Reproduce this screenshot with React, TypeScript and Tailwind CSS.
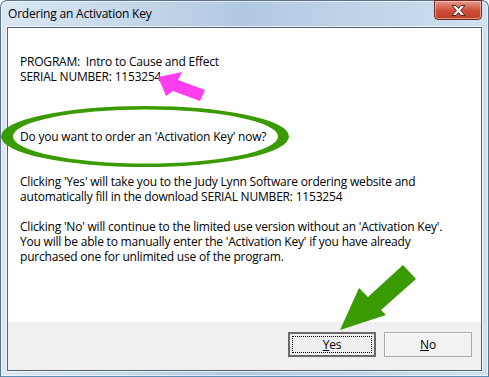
import { FC } from "react";

const font = { fontFamily: '"Open Sans", "Noto Sans", Arial, sans-serif' };

const CloseButton: FC = () => (
  <div className="self-start mt-[-1px] w-[48px] h-[20px] rounded-b-[4px] border border-[#6b2a22] bg-gradient-to-b from-[#e59a8b] via-[#d0513b] to-[#c03c28] flex items-center justify-center shadow-[inset_0_0_0_1px_rgba(255,220,210,0.55)]">
    <svg width="17" height="13" viewBox="0 0 17 13">
      <path d="M2 1.5h4l2.5 3 2.5-3h4l-4.5 5 4.5 5h-4l-2.5-3-2.5 3h-4l4.5-5z" fill="#ffffff" stroke="#4a2520" strokeWidth="1" strokeLinejoin="round" />
    </svg>
  </div>
);

const Annotations: FC = () => (
  <svg className="absolute inset-0 pointer-events-none" width="489" height="377" viewBox="0 0 489 377">
    {/* ellipse round the question */}
    <path
      fillRule="evenodd"
      fill="#3a9b00"
      d="M1 136.5a144 30.5 0 1 0 288 0a144 30.5 0 1 0 -288 0z M13 136.5a132.5 27 0 1 0 265 0a132.5 27 0 1 0 -265 0z"
    />
    {/* pink arrow at the serial number */}
    <polygon fill="#ff3df0" points="158,77 182,72 178,80 205,90 200,101 173,91 166,96" />
    {/* green arrow at Yes */}
    <polygon fill="#3a9b00" points="340,330 359,288 368,297 403,265 416,279 381,310 386,315" />
  </svg>
);

const App: FC = () => {
  return (
    <div className="relative w-[489px] h-[377px] overflow-hidden bg-white" style={font}>
      <div className="flex flex-col w-full h-full rounded-t-[7px] border border-[#5d738c] border-b-[#5a8fb8] bg-gradient-to-r from-[#dbe7f3] via-[#b1c9e1] to-[#cfe0f0] px-[6px] pb-[5px] shadow-[inset_0_0_0_1px_rgba(255,255,255,0.6)]">
        <div className="h-[26px] flex justify-between">
          <span className="pl-[1px] pt-[5px] text-[12px] leading-[15px] tracking-[-0.2px] text-black">Ordering an Activation Key</span>
          <CloseButton />
        </div>
        <div className="flex-1 flex flex-col border border-[#4f6173] bg-white text-[12px] leading-[15px] tracking-[-0.2px] text-black shadow-[0_0_0_1px_rgba(255,255,255,0.7)]">
          <div className="flex-1 pl-[12px] pt-[26px]">
            <p className="whitespace-pre">PROGRAM:  Intro to Cause and Effect</p>
            <p>SERIAL NUMBER: 1153254</p>
            <p className="mt-[45px]">Do you want to order an 'Activation Key' now?</p>
            <p className="mt-[30px]">Clicking 'Yes' will take you to the Judy Lynn Software ordering website and<br />automatically fill in the download SERIAL NUMBER: 1153254</p>
            <p className="mt-[15px]">Clicking 'No' will continue to the limited use version without an 'Activation Key'.<br />You will be able to manually enter the 'Activation Key' if you have already<br />purchased one for unlimited use of the program.</p>
          </div>
          <div className="h-[48px] bg-[#f0f0f0] flex justify-end items-start pt-[10px] pr-[9px] gap-[8px]">
            <button className="w-[88px] h-[25px] border-2 border-[#6a6a6a] bg-[#eeeeee] flex items-center justify-center p-[2px]">
              <span className="w-full h-full border border-dotted border-black flex items-center justify-center text-[12px] leading-[15px]">
                <span><span className="underline">Y</span>es</span>
              </span>
            </button>
            <button className="w-[88px] h-[25px] border border-[#a9a9a9] bg-[#f2f2f2] shadow-[inset_1px_1px_0_#ffffff] flex items-center justify-center text-[12px] leading-[15px]">
              <span><span className="underline">N</span>o</span>
            </button>
          </div>
        </div>
      </div>
      <Annotations />
    </div>
  );
};

export default App;
